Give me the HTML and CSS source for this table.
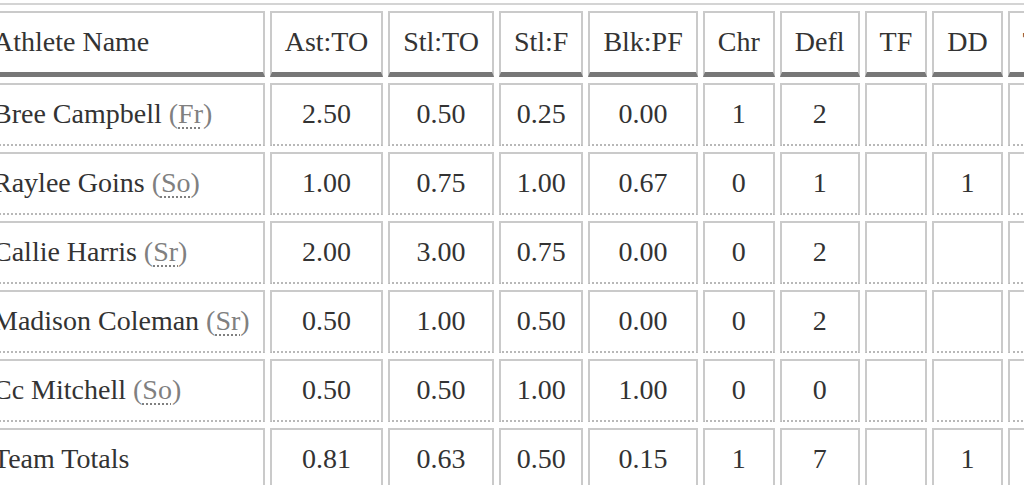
FILE: index.html
```html
<!DOCTYPE html>
<html>
<head>
<meta charset="utf-8">
<link rel="stylesheet" href="styles.css">
</head>
<body>
<table class="stats">
  <thead>
    <tr>
      <th class="name">Athlete Name</th>
      <th>Ast:TO</th>
      <th>Stl:TO</th>
      <th>Stl:F</th>
      <th>Blk:PF</th>
      <th>Chr</th>
      <th>Defl</th>
      <th>TF</th>
      <th>DD</th>
      <th>TD</th>
    </tr>
  </thead>
  <tbody>
    <tr>
      <td class="name">Bree Campbell <span class="yr">(<abbr title="Freshman">Fr</abbr>)</span></td>
      <td>2.50</td><td>0.50</td><td>0.25</td><td>0.00</td><td>1</td><td>2</td><td></td><td></td><td></td>
    </tr>
    <tr>
      <td class="name">Raylee Goins <span class="yr">(<abbr title="Sophomore">So</abbr>)</span></td>
      <td>1.00</td><td>0.75</td><td>1.00</td><td>0.67</td><td>0</td><td>1</td><td></td><td>1</td><td></td>
    </tr>
    <tr>
      <td class="name">Callie Harris <span class="yr">(<abbr title="Senior">Sr</abbr>)</span></td>
      <td>2.00</td><td>3.00</td><td>0.75</td><td>0.00</td><td>0</td><td>2</td><td></td><td></td><td></td>
    </tr>
    <tr>
      <td class="name">Madison Coleman <span class="yr">(<abbr title="Senior">Sr</abbr>)</span></td>
      <td>0.50</td><td>1.00</td><td>0.50</td><td>0.00</td><td>0</td><td>2</td><td></td><td></td><td></td>
    </tr>
    <tr>
      <td class="name">Cc Mitchell <span class="yr">(<abbr title="Sophomore">So</abbr>)</span></td>
      <td>0.50</td><td>0.50</td><td>1.00</td><td>1.00</td><td>0</td><td>0</td><td></td><td></td><td></td>
    </tr>
    <tr class="totals">
      <td class="name">Team Totals</td>
      <td>0.81</td><td>0.63</td><td>0.50</td><td>0.15</td><td>1</td><td>7</td><td></td><td>1</td><td></td>
    </tr>
  </tbody>
</table>
</body>
</html>
```
FILE: styles.css
```css
html, body {
  margin: 0;
  padding: 0;
  background: #fff;
  overflow: hidden;
}

body {
  font-family: "Liberation Serif", "Times New Roman", serif;
  font-size: 28px;
  color: #333;
}

.stats {
  margin: 3px 0 0 -29px;
  border: 2px solid #d4d4d4;
  border-spacing: 5px 6px;
  white-space: nowrap;
}

.stats th,
.stats td {
  font-weight: normal;
  text-align: center;
  padding: 13px 13px 14px;
  border: 2px solid #cacaca;
  line-height: 32px;
}

.stats th {
  border-bottom: 5px solid #777;
}

.stats td {
  border-bottom: 2px dotted #b8b8b8;
}

.stats .name {
  text-align: left;
}

.yr {
  color: #808080;
}

.yr abbr {
  text-decoration: underline dotted;
  text-decoration-thickness: 2px;
  text-underline-offset: 4px;
}
```
